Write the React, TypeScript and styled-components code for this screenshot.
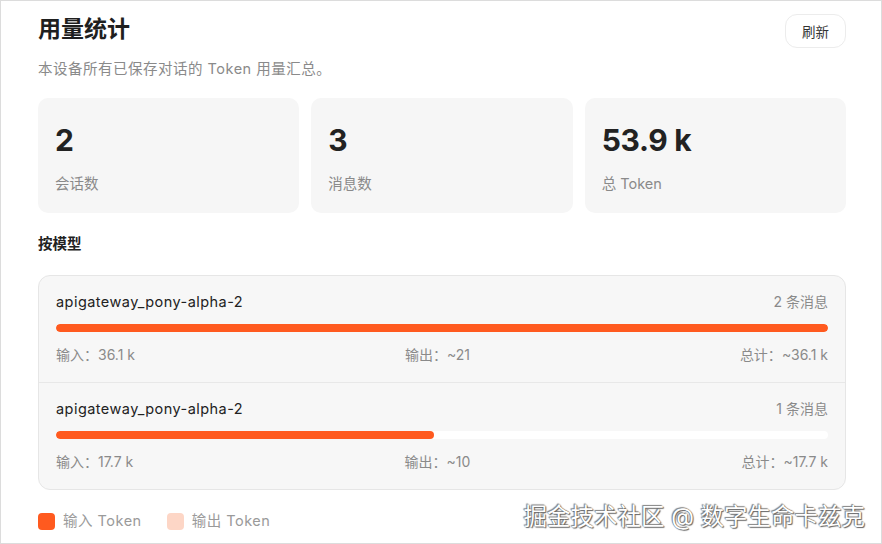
import React from 'react';
import styled, { createGlobalStyle } from 'styled-components';

const GlobalStyle = createGlobalStyle`
  html, body {
    margin: 0;
    padding: 0;
    background: #fff;
  }
  body {
    font-family: Inter, "Noto Sans CJK SC", sans-serif;
    -webkit-font-smoothing: antialiased;
  }
`;

const ORANGE = '#ff5a1f';
const ORANGE_LIGHT = '#fdd6c6';

const Frame = styled.div`
  position: relative;
  width: 882px;
  height: 544px;
  box-sizing: border-box;
  border: 1px solid #dcdcdc;
  padding: 0 35px 0 37px;
  overflow: hidden;
  background: #fff;
`;

const Header = styled.div`
  display: flex;
  justify-content: space-between;
  align-items: flex-start;
  padding-top: 12px;
`;

const Title = styled.h1`
  margin: 0;
  font-size: 23px;
  line-height: 32px;
  font-weight: 700;
  color: #1f1f1f;
`;

const Subtitle = styled.p`
  margin: 14px 0 0;
  font-size: 14.5px;
  line-height: 20px;
  letter-spacing: 0.5px;
  color: #8a8a8a;
`;

const RefreshButton = styled.button`
  margin-top: 1px;
  width: 61px;
  height: 34px;
  border: 1px solid #ececec;
  border-radius: 12px;
  background: #fff;
  font-family: inherit;
  font-size: 13.5px;
  color: #333;
  cursor: pointer;
`;

const Cards = styled.div`
  display: grid;
  grid-template-columns: repeat(3, 1fr);
  gap: 12px;
  margin-top: 19px;
`;

const Card = styled.div`
  height: 115px;
  box-sizing: border-box;
  padding: 24px 17px 0;
  background: #f6f6f6;
  border-radius: 10px;
`;

const CardValue = styled.div`
  font-size: 30px;
  line-height: 36px;
  font-weight: 700;
  letter-spacing: -0.3px;
  color: #222;
`;

const CardLabel = styled.div`
  margin-top: 16px;
  font-size: 14.5px;
  line-height: 20px;
  color: #8a8a8a;
`;

const SectionTitle = styled.h2`
  margin: 21px 0 0;
  font-size: 14.5px;
  line-height: 20px;
  font-weight: 700;
  color: #222;
`;

const ModelList = styled.div`
  margin-top: 21px;
  border: 1px solid #e6e6e6;
  border-radius: 12px;
  background: #f7f7f7;
  overflow: hidden;
`;

const ModelRow = styled.div`
  padding: 16px 17px 17px;
  & + & {
    border-top: 1px solid #e8e8e8;
  }
`;

const RowTop = styled.div`
  display: flex;
  justify-content: space-between;
  align-items: center;
  line-height: 20px;
`;

const ModelName = styled.span`
  font-size: 14.5px;
  letter-spacing: 0.45px;
  color: #222;
`;

const MsgCount = styled.span`
  font-size: 14px;
  color: #8a8a8a;
`;

const Track = styled.div`
  margin-top: 12px;
  height: 8px;
  border-radius: 4px;
  background: #fff;
  overflow: hidden;
  display: flex;
`;

const Fill = styled.div<{ $color: string }>`
  height: 100%;
  background: ${(p) => p.$color};
  border-radius: 4px;
`;

const StatsRow = styled.div`
  margin-top: 13px;
  display: flex;
  justify-content: space-between;
  font-size: 14px;
  line-height: 20px;
  color: #8a8a8a;
`;

const Legend = styled.div`
  display: flex;
  align-items: center;
  gap: 25px;
  margin-top: 21px;
`;

const LegendItem = styled.div`
  display: flex;
  align-items: center;
  gap: 8px;
  font-size: 14.5px;
  line-height: 20px;
  letter-spacing: 0.5px;
  color: #9a9a9a;
`;

const Swatch = styled.span<{ $color: string }>`
  width: 17px;
  height: 17px;
  border-radius: 4px;
  background: ${(p) => p.$color};
`;

const Watermark = styled.div`
  position: absolute;
  right: 16px;
  bottom: 11px;
  font-size: 23.5px;
  line-height: 30px;
  color: #fff;
  text-shadow: 0 0 1px #555, 1px 1px 1px #666, -1px -1px 1px #888;
  white-space: nowrap;
`;

const models = [
  { name: 'apigateway_pony-alpha-2', count: 2, input: '36.1 k', output: '~21', total: '~36.1 k', pct: 100 },
  { name: 'apigateway_pony-alpha-2', count: 1, input: '17.7 k', output: '~10', total: '~17.7 k', pct: 49 },
];

const stats = [
  { value: '2', label: '会话数' },
  { value: '3', label: '消息数' },
  { value: '53.9 k', label: '总 Token' },
];

export default function App() {
  return (
    <>
      <GlobalStyle />
      <Frame>
        <Header>
          <div>
            <Title>用量统计</Title>
            <Subtitle>本设备所有已保存对话的 Token 用量汇总。</Subtitle>
          </div>
          <RefreshButton>刷新</RefreshButton>
        </Header>

        <Cards>
          {stats.map((s) => (
            <Card key={s.label}>
              <CardValue>{s.value}</CardValue>
              <CardLabel>{s.label}</CardLabel>
            </Card>
          ))}
        </Cards>

        <SectionTitle>按模型</SectionTitle>

        <ModelList>
          {models.map((m, i) => (
            <ModelRow key={i}>
              <RowTop>
                <ModelName>{m.name}</ModelName>
                <MsgCount>{m.count} 条消息</MsgCount>
              </RowTop>
              <Track>
                <Fill $color={ORANGE} style={{ width: `${m.pct}%` }} />
              </Track>
              <StatsRow>
                <span>输入：{m.input}</span>
                <span>输出：{m.output}</span>
                <span>总计：{m.total}</span>
              </StatsRow>
            </ModelRow>
          ))}
        </ModelList>

        <Legend>
          <LegendItem>
            <Swatch $color={ORANGE} />
            输入 Token
          </LegendItem>
          <LegendItem>
            <Swatch $color={ORANGE_LIGHT} />
            输出 Token
          </LegendItem>
        </Legend>

        <Watermark>掘金技术社区 @ 数字生命卡兹克</Watermark>
      </Frame>
    </>
  );
}
